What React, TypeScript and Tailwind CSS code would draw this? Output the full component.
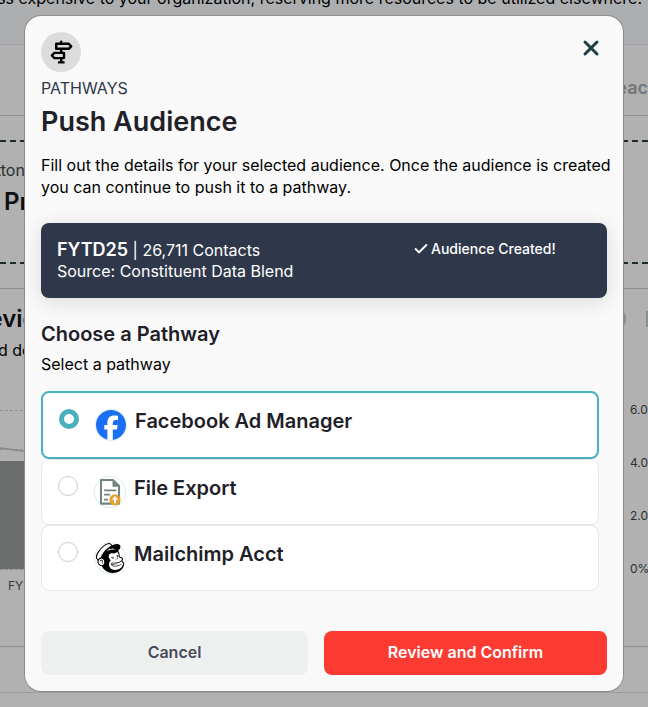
import { useState, type ReactNode } from "react";
import { FaFacebook } from "react-icons/fa6";
import { SiMailchimp } from "react-icons/si";
import { Check, X } from "lucide-react";

function SignpostIcon() {
  return (
    <svg viewBox="0 0 24 24" className="size-6" fill="none" stroke="#000" strokeWidth="2.4" strokeLinejoin="round" strokeLinecap="round" aria-hidden="true">
      <path d="M12.2 1.8V3M12.2 9.8v2.6M12.2 18.8v3.4M10 22.4h4.6" />
      <path d="M7.2 3.8h12.6l2.4 2.5-2.4 2.5H7.2z" />
      <path d="M15 12.9H5.4l-2.6 2.6 2.6 2.6H15z" />
    </svg>
  );
}

function FileExportIcon() {
  return (
    <svg viewBox="0 0 32 32" className="size-8" fill="none" aria-hidden="true">
      <path d="M7 4h12l6 6v17.6H7z" fill="#fff" stroke="#738583" strokeWidth="2.1" strokeLinejoin="round" />
      <path d="M18.5 3.5v7.2H26z" fill="#738583" />
      <path d="M10 14.4h12.4M10 18.7h6.2M10 23.6h4" stroke="#738583" strokeWidth="1.8" />
      <circle cx="21" cy="23.8" r="5.6" fill="#e5a02d" />
      <path d="M21 27.2v-5" stroke="#fff" strokeWidth="2.2" />
      <path d="M17.8 23.4L21 20l3.2 3.4z" fill="#fff" />
    </svg>
  );
}

const pathways: { id: string; name: string; icon: ReactNode }[] = [
  { id: "facebook", name: "Facebook Ad Manager", icon: <FaFacebook className="size-[30px] text-[#1a6ff5]" /> },
  { id: "file", name: "File Export", icon: <FileExportIcon /> },
  { id: "mailchimp", name: "Mailchimp Acct", icon: <SiMailchimp className="size-[30px] text-black" /> },
];

function Dashboard() {
  return (
    <div aria-hidden="true" className="min-h-screen overflow-hidden bg-[#fefefe] text-black">
      <div className="flex h-[45px] items-start justify-end border-b border-[#e7e9f4] bg-[#f8fafd] pr-1.5">
        <p className="-mt-3.5 text-base leading-6 whitespace-nowrap">
          ess expensive to your organization, reserving more resources to be utilized elsewhere.
        </p>
      </div>
      <div className="flex h-[71px] items-center justify-end border-b border-[#cfcfcf] pt-4 text-lg font-semibold text-[#a8a8a8]">
        Reac
      </div>
      <div className="py-6">
        <div className="h-[124px] border-y-2 border-dashed border-[#2f3d3c] pt-4">
          <p className="-ml-6 text-base text-[#384846]">Button</p>
          <p className="mt-1 pl-1 text-2xl font-semibold text-[#16161c]">Prospects</p>
        </div>
      </div>
      <div className="flex h-[359px] flex-col border-y border-[#c9c9d6] pt-3">
        <div className="flex items-center justify-between pt-0.5">
          <h2 className="-ml-9 text-2xl font-semibold text-[#16161c]">Preview</h2>
          <div className="flex gap-5 text-[#c5cfcd]">
            <div className="h-4 w-3 rounded-lg border-2" />
            <div className="h-4 w-0.5 border-b-2 border-l-2" />
          </div>
        </div>
        <p className="mt-[3px] -ml-[46px] text-base">Record donors</p>
        <div className="mt-11 flex items-start">
          <div className="w-full">
            <svg viewBox="0 0 630 170" preserveAspectRatio="none" className="h-[170px] w-full">
              <path d="M0 4.5h630M0 43.5h630M0 57.5h630M0 110.5h630M0 163.5h630" stroke="#cccecc" strokeDasharray="3 2" />
              <path d="M0 42l30 4 100 12" stroke="#c2c2c2" strokeWidth="1.5" fill="none" />
              <path d="M-10 55h60v108h-60z" fill="#999c9a" />
            </svg>
            <p className="pl-2 text-xs leading-5 text-[#485654]">FYTD</p>
          </div>
          <div className="-mt-[5px] flex w-[22px] shrink-0 flex-col gap-[35px] pl-1 text-xs leading-[18px] text-[#3b4947]">
            <span>6.0%</span>
            <span>4.0%</span>
            <span>2.0%</span>
            <span>0%</span>
          </div>
        </div>
      </div>
      <div className="h-[46px] border-b border-[#dedede]" />
    </div>
  );
}

export default function App() {
  const [selected, setSelected] = useState("facebook");

  return (
    <main className="relative font-['Inter',sans-serif]">
      <Dashboard />

      <div className="absolute inset-0 flex items-start justify-center bg-black/30 px-[25px] py-4">
        <section
          role="dialog"
          aria-labelledby="dialog-title"
          className="w-full max-w-2xl rounded-2xl bg-[#f9f9f9] p-4 text-[#1f2028] shadow-[0_0_0_1px_#8e8e8e]"
        >
          <header>
            <div className="flex items-start justify-between">
              <div className="grid size-10 place-items-center rounded-full bg-[#dcdcdc]">
                <SignpostIcon />
              </div>
              <button type="button" aria-label="Close" className="grid size-8 place-items-center text-[#1f3d45]">
                <X className="size-6" strokeWidth={3} />
              </button>
            </div>
            <p className="mt-1 text-base leading-6 text-[#2f374b]">PATHWAYS</p>
            <h1 id="dialog-title" className="mt-1 text-[27px] leading-9 font-semibold">
              Push Audience
            </h1>
            <p className="mt-3.5 -mr-2 text-base leading-[22px] text-black">
              Fill out the details for your selected audience. Once the audience is created you can continue to push it to a
              pathway.
            </p>
          </header>

          <div className="mt-[25px] grid grid-cols-3 rounded-lg bg-[#2f374b] px-4 pt-4 pb-[17px] text-white shadow-[0_4px_20px_rgba(0,0,0,0.12)]">
            <div className="col-span-2 text-base leading-5">
              <p className="leading-[22px]">
                <strong className="text-lg leading-[22px] font-semibold">FYTD25</strong> | 26,711 Contacts
              </p>
              <p>Source: Constituent Data Blend</p>
            </div>
            <p className="flex h-5 items-center gap-0.5 text-sm font-medium">
              <Check className="size-4" strokeWidth={3} />
              Audience Created!
            </p>
          </div>

          <h2 className="mt-6 text-xl leading-6 font-semibold">Choose a Pathway</h2>
          <p className="mt-1.5 text-base leading-6 text-black">Select a pathway</p>

          <fieldset className="mt-[15px] mr-2">
            <legend className="sr-only">Pathway</legend>
            {pathways.map((pathway) => (
              <label
                key={pathway.id}
                htmlFor={pathway.id}
                className="flex items-start rounded-lg border border-[#e7e7ee] bg-white p-4 has-checked:border-2 has-checked:border-[#47b0bc]"
              >
                <input
                  id={pathway.id}
                  type="radio"
                  name="pathway"
                  checked={selected === pathway.id}
                  onChange={() => setSelected(pathway.id)}
                  className="size-5 shrink-0 appearance-none rounded-full border border-[#c9ccd6] bg-white checked:border-5 checked:border-[#47b0bc]"
                />
                <span className="ml-4 grid size-8 shrink-0 place-items-center rounded-full shadow-[inset_0_0_0_1px_#dceeee]">
                  {pathway.icon}
                </span>
                <span className="ml-2 text-xl leading-6 font-semibold">{pathway.name}</span>
              </label>
            ))}
          </fieldset>

          <footer className="mt-10 grid grid-cols-[267fr_283fr] gap-4 text-base font-semibold">
            <button type="button" className="h-11 rounded-lg bg-[#eef0f0] pb-0.5 text-[#484b5c]">
              Cancel
            </button>
            <button type="button" className="h-11 rounded-lg bg-[#fb3a32] pb-0.5 text-white">
              Review and Confirm
            </button>
          </footer>
        </section>
      </div>
    </main>
  );
}
